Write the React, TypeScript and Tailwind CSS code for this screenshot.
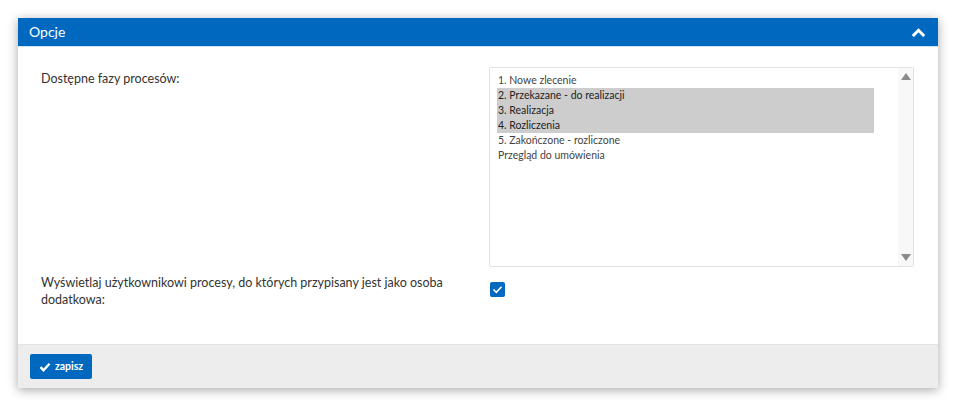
import React, { useState } from 'react';

const phases = [
  { id: 1, label: '1. Nowe zlecenie', selected: false },
  { id: 2, label: '2. Przekazane - do realizacji', selected: true },
  { id: 3, label: '3. Realizacja', selected: true },
  { id: 4, label: '4. Rozliczenia', selected: true },
  { id: 5, label: '5. Zakończone - rozliczone', selected: false },
  { id: 6, label: 'Przegląd do umówienia', selected: false },
];

const App: React.FC = () => {
  const [items, setItems] = useState(phases);
  const [showExtra, setShowExtra] = useState(true);
  const [open, setOpen] = useState(true);

  const toggle = (id: number) => {
    setItems((prev) => prev.map((p) => (p.id === id ? { ...p, selected: !p.selected } : p)));
  };

  return (
    <div className="min-h-screen bg-white pt-[18px] pl-[18px] pr-[18px] font-['Lato','Noto_Sans',sans-serif] text-[#333]">
      <div className="w-[920px] bg-white shadow-[0_2px_10px_rgba(0,0,0,0.35)]">
        {/* header */}
        <div className="h-[29px] bg-[#0068bf] border-b border-[#cfe3f5] flex items-center justify-between pl-[11px] pr-[13px]">
          <span className="text-white text-[14px] leading-none">Opcje</span>
          <button onClick={() => setOpen(!open)} className="text-white" aria-label="Zwiń">
            <svg width="13" height="9" viewBox="0 0 13 9" fill="none">
              <path d="M1.8 7L6.5 2.3 11.2 7" stroke="currentColor" strokeWidth="3" strokeLinecap="square" />
            </svg>
          </button>
        </div>

        {open && (
          <div className="pt-[20px] pb-[36px] pl-[23px] pr-[24px]">
            <div className="flex">
              <div className="w-[448px] text-[12.5px] leading-[17px] pt-[3px]">Dostępne fazy procesów:</div>
              <div className="w-[425px] h-[200px] border border-[#dfe3e8] rounded-[2px] flex">
                <div className="flex-1 pl-[7px] pt-[5px]">
                  {items.map((p) => (
                    <div
                      key={p.id}
                      onClick={() => toggle(p.id)}
                      className={`w-[377px] h-[15px] pl-[1px] text-[10.5px] leading-[15px] cursor-default ${
                        p.selected ? 'bg-[#cdcdcd] text-[#222]' : 'text-[#444]'
                      }`}
                    >
                      {p.label}
                    </div>
                  ))}
                </div>
                <div className="w-[15px] bg-[#f8f8f8] flex flex-col items-center justify-between py-[5px]">
                  <svg width="10" height="7" viewBox="0 0 10 7">
                    <path d="M5 0L10 7H0z" fill="#8a8a8a" />
                  </svg>
                  <svg width="10" height="7" viewBox="0 0 10 7">
                    <path d="M0 0h10L5 7z" fill="#8a8a8a" />
                  </svg>
                </div>
              </div>
            </div>

            <div className="flex mt-[7px]">
              <div className="w-[448px] pr-[20px] text-[12.5px] leading-[17px]">
                Wyświetlaj użytkownikowi procesy, do których przypisany jest jako osoba dodatkowa:
              </div>
              <button
                onClick={() => setShowExtra(!showExtra)}
                className={`mt-[8px] ml-[1px] w-[15px] h-[15px] rounded-[2px] flex items-center justify-center ${
                  showExtra ? 'bg-[#0068bf]' : 'bg-white border border-[#aaa]'
                }`}
                aria-label="Wyświetlaj"
              >
                {showExtra && (
                  <svg width="11" height="9" viewBox="0 0 11 9" fill="none">
                    <path d="M1.5 4.5l2.8 2.8L9.5 1.8" stroke="white" strokeWidth="1.6" />
                  </svg>
                )}
              </button>
            </div>
          </div>
        )}

        {/* footer */}
        <div className="h-[44px] bg-[#ededed] border-t border-[#e0e3e8] flex items-center pl-[12px]">
          <button className="h-[25px] w-[62px] bg-[#0068bf] text-white rounded-[2px] flex items-center justify-center gap-[4px] text-[10.5px] font-bold">
            <svg width="12" height="10" viewBox="0 0 12 10" fill="none">
              <path d="M1.5 5.2l3 3L10.5 1.8" stroke="white" strokeWidth="2.4" />
            </svg>
            zapisz
          </button>
        </div>
      </div>
    </div>
  );
};

export default App;
